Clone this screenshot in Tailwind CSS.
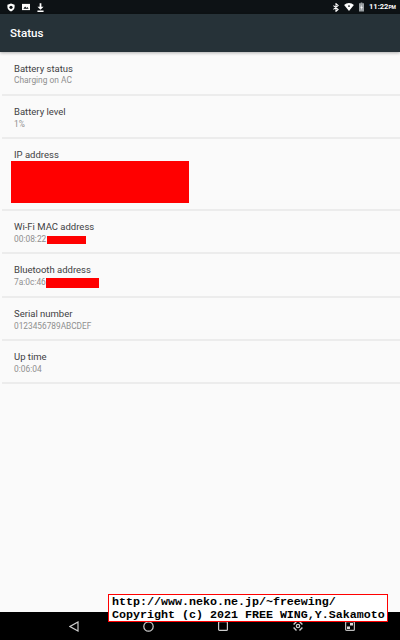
<!DOCTYPE html>
<html lang="en">
<head>
  <meta charset="UTF-8">
  <title>Status</title>
  <script src="https://cdn.jsdelivr.net/npm/@tailwindcss/browser@4"></script>
</head>
<body class="font-['Roboto',sans-serif]">
  <div class="relative flex flex-col w-[400px] h-[640px] overflow-hidden bg-[#fafafa]">
    <!-- status bar -->
    <div class="flex items-center h-[14px] pl-[7px] pr-[4px] bg-[#0d1215] text-white">
      <svg class="w-[8px] h-[9px] mr-[7px]" viewBox="0 0 10 10"><path fill="#fff" d="M5 0l4.500 1.500v3C9.500 7 7.300 9 5 10 2.700 9 .5 7 .5 4.500v-3z"/><circle cx="5" cy="4.800" r="2" fill="#0d1215"/></svg>
      <svg class="w-[8px] h-[8px] mr-[7px]" viewBox="0 0 9 9"><path fill="#fff" d="M0 1h9v7H0z"/><path fill="#0d1215" d="M1.500 6.500l2-2.500 1.500 1.500 1-1 1.500 2z"/></svg>
      <svg class="w-[7px] h-[9px]" viewBox="0 0 8 10"><path fill="#fff" d="M3 0h2v4h2.500L4 7.500.5 4H3zM.5 8.500h7V10h-7z"/></svg>
      <div class="flex-1"></div>
      <svg class="w-[6px] h-[9px] mr-[5px]" viewBox="0 0 7 10"><path fill="none" stroke="#fff" stroke-width="1.200" d="M.5 2.700l5.500 4.600L3.500 9.500V.5L6 2.700.5 7.300"/></svg>
      <svg class="w-[10px] h-[8px] mr-[5px]" viewBox="0 0 11 9"><path fill="#fff" d="M0 2.300C3-.700 8-.700 11 2.300L5.500 9z"/><circle cx="5.500" cy="3.500" r="1" fill="#0d1215"/></svg>
      <svg class="w-[5px] h-[10px] mr-[5px]" viewBox="0 0 6 11"><path fill="#9aa0a3" d="M0 1h2V0h2v1h2v10H0z"/><path fill="#fff" d="M3.500 2.500L1.500 6.500H3L2.500 9.500 4.500 5.500H3z"/></svg>
      <span class="text-[7.500px] font-bold leading-none">11:22</span>
      <span class="text-[5px] font-bold leading-none">PM</span>
    </div>

    <!-- action bar -->
    <div class="flex items-center h-[38px] pt-[1px] px-[10px] bg-[#263238] text-white text-[11.600px] font-medium shadow-[0_1px_3px_rgba(0,0,0,0.3)]">Status</div>

    <!-- list -->
    <div class="flex flex-col pt-[1px] pl-[2px]">
      <div class="h-[43px] pt-[9px] pl-[12px] border-b-2 border-[#ececec]">
        <p class="text-[9.500px] leading-[14px] text-[#3f4143]">Battery status</p>
        <p class="-mt-[1px] text-[8.400px] leading-[11px] text-[#8f8f8f]">Charging on AC</p>
      </div>
      <div class="h-[43px] pt-[9px] pl-[12px] border-b-2 border-[#ececec]">
        <p class="text-[9.500px] leading-[14px] text-[#3f4143]">Battery level</p>
        <p class="text-[8.400px] leading-[11px] text-[#8f8f8f]">1%</p>
      </div>
      <div class="h-[72px] pt-[9px] pl-[12px] border-b-2 border-[#ececec]">
        <p class="text-[9.500px] leading-[14px] text-[#3f4143]">IP address</p>
        <div class="w-[178px] h-[42px] -mt-[1px] -ml-[3px] bg-[#ff0000]"></div>
      </div>
      <div class="h-[43px] pt-[9px] pl-[12px] border-b-2 border-[#ececec]">
        <p class="text-[9.500px] leading-[14px] text-[#3f4143]">Wi-Fi MAC address</p>
        <p class="flex items-center text-[8.400px] leading-[11px] text-[#8f8f8f]">00:08:22<span class="w-[39px] h-[8px] ml-[1px] bg-[#ff0000]"></span></p>
      </div>
      <div class="h-[44px] pt-[9px] pl-[12px] border-b-2 border-[#ececec]">
        <p class="text-[9.500px] leading-[14px] text-[#3f4143]">Bluetooth address</p>
        <p class="flex items-center text-[8.400px] leading-[11px] text-[#8f8f8f]">7a:0c:46<span class="w-[53px] h-[10px] bg-[#ff0000]"></span></p>
      </div>
      <div class="h-[43px] pt-[9px] pl-[12px] border-b-2 border-[#ececec]">
        <p class="text-[9.500px] leading-[14px] text-[#3f4143]">Serial number</p>
        <p class="text-[8.300px] leading-[11px] text-[#8f8f8f]">0123456789ABCDEF</p>
      </div>
      <div class="h-[43px] pt-[9px] pl-[12px] border-b-2 border-[#ececec]">
        <p class="text-[9.500px] leading-[14px] text-[#3f4143]">Up time</p>
        <p class="text-[8.400px] leading-[11px] text-[#8f8f8f]">0:06:04</p>
      </div>
    </div>

    <!-- nav bar -->
    <div class="mt-auto flex items-center h-[28px] pl-[69px] bg-black">
      <svg class="w-[10px] h-[11px]" viewBox="0 0 10 11"><path fill="none" stroke="#ccc" stroke-width="1.200" d="M9 1v9L1 5.500z"/></svg>
      <svg class="w-[11px] h-[11px] ml-[64px]" viewBox="0 0 11 11"><circle cx="5.500" cy="5.500" r="4.700" fill="none" stroke="#ccc" stroke-width="1.200"/></svg>
      <svg class="w-[10px] h-[10px] ml-[64px]" viewBox="0 0 10 10"><rect x=".6" y=".6" width="8.800" height="8.800" rx="1" fill="none" stroke="#ccc" stroke-width="1.200"/></svg>
      <svg class="w-[10px] h-[10px] ml-[65px]" viewBox="0 0 10 10"><path fill="none" stroke="#ccc" stroke-width="1.400" d="M.6 3.500L3.500.6M6.500.6l2.900 2.900M9.400 6.500L6.500 9.400M3.500 9.400L.6 6.500"/><circle cx="5" cy="5" r="1.700" fill="none" stroke="#ccc" stroke-width="1.200"/></svg>
      <svg class="w-[10px] h-[10px] ml-[42px]" viewBox="0 0 10 10"><rect x=".6" y=".6" width="8.800" height="8.800" rx="1" fill="none" stroke="#bbb" stroke-width="1.200"/><rect x="5" y="2" width="3" height="2.500" fill="#ddd"/><rect x="2" y="5.500" width="3" height="2.500" fill="#ddd"/></svg>
    </div>

    <!-- watermark -->
    <div class="absolute left-[108px] top-[594px] w-[280px] h-[28px] border border-[#ff0000] bg-white pl-[3px] pt-[1px] font-['Liberation_Mono','DejaVu_Sans_Mono',monospace] font-bold text-[11.670px] leading-[12.500px] text-black whitespace-nowrap">
      <div>http://www.neko.ne.jp/~freewing/</div>
      <div>Copyright (c) 2021 FREE WING,Y.Sakamoto</div>
    </div>
  </div>
</body>
</html>
